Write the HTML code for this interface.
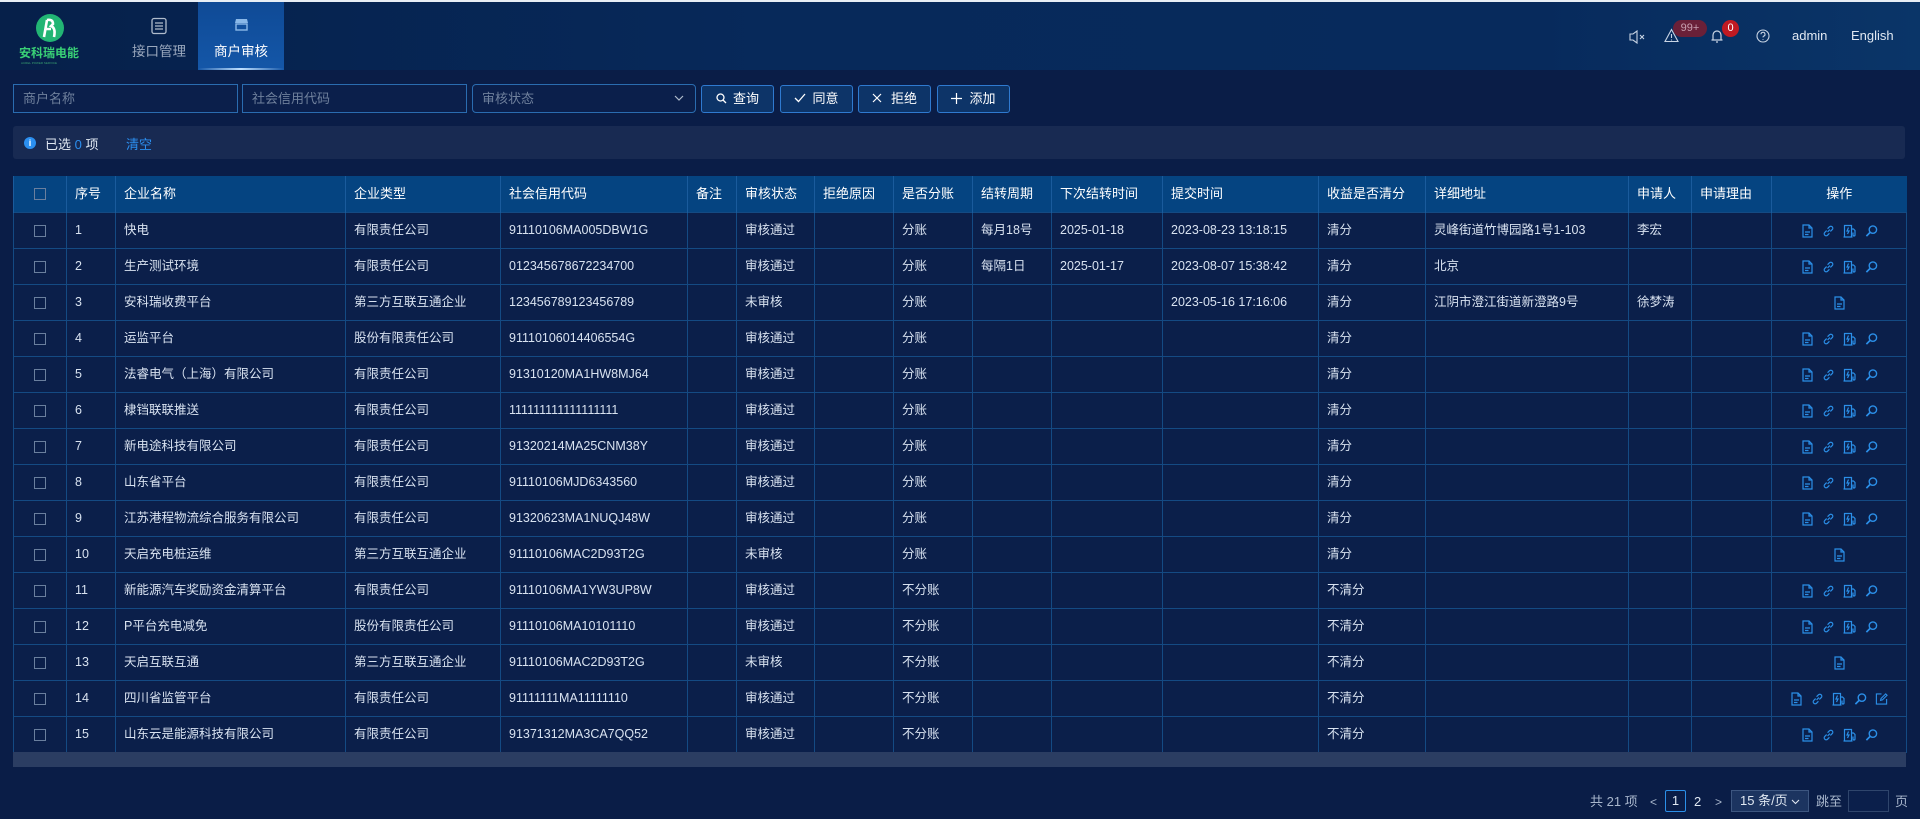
<!DOCTYPE html>
<html><head><meta charset="utf-8">
<style>
*{box-sizing:border-box;margin:0;padding:0}
body{width:1920px;height:819px;overflow:hidden;background:#0a1d47;font-family:"Liberation Sans","Noto Sans CJK SC",sans-serif;color:#d8e2f0;font-size:13px;position:relative}
.hdr{position:absolute;left:0;top:0;width:1920px;height:70px;background:linear-gradient(90deg,#06204a 0%,#07295a 40%,#072a5c 80%,#0a3568 100%);border-top:2px solid #e8eef5}
.tab{position:absolute;top:0;height:68px;width:86px;text-align:center;font-size:13.5px}
.tab .lbl{position:absolute;top:38px;left:0;width:100%}
.inp{position:absolute;top:84px;height:29px;border:1px solid #2a6cb0;background:#0b1f4b;color:#6f809c;padding-left:9px;line-height:27px;font-size:13px}
.btn{position:absolute;top:85px;height:28px;border:1px solid #2f7ad0;border-radius:3px;background:#0d3468;color:#fff;line-height:26px;text-align:center;font-size:13px}
.alert{position:absolute;left:13px;top:126px;width:1892px;height:33px;background:#182a52;border-radius:3px}
table{position:absolute;left:13px;top:176px;border-collapse:collapse;table-layout:fixed;width:1893px}
th{background:#054481;color:#fff;font-weight:normal;height:36px;text-align:left;padding-left:8px;border-left:1px solid #1a5b9c;font-size:13px;line-height:16px}
td{height:36px;border:1px solid #144a83;padding:0 0 0 8px;white-space:nowrap;overflow:hidden;background:#0b1f4a;font-size:12.5px;line-height:16px;vertical-align:middle}
td span.t{display:inline-block;vertical-align:middle}
th:first-child,td:first-child{padding-left:0;text-align:center}
.cb{display:inline-block;width:12px;height:12px;border:1px solid #6a7f9e;vertical-align:middle}
.ops{text-align:center;padding-left:0}
.ops svg{margin:0 4px;vertical-align:middle}
.sb{position:absolute;left:13px;top:752px;width:1893px;height:15px;background:#2b3d62}
.pg{position:absolute;top:792px;font-size:13px;color:#a8b6cc;line-height:20px}
</style></head><body>
<div class="hdr">
 <svg style="position:absolute;left:34px;top:10px" width="32" height="32" viewBox="0 0 32 32"><circle cx="16" cy="16" r="14" fill="#22b574"/><path d="M13 8 L10 25 M13 8 Q19 7 19 12 L17 14 Q22 16 20 25 M12 17 L17 17" stroke="#fff" stroke-width="2.6" fill="none"/></svg>
 <div style="position:absolute;left:19px;top:42px;font-size:12px;color:#39d076;font-weight:bold">安科瑞电能</div>
 <div style="position:absolute;left:21px;top:59px;font-size:3px;color:#39a070">ACREL POWER SERVICE</div>
 <div class="tab" style="left:116px;color:#9aa8bd">
  <svg style="position:absolute;left:34px;top:15px" width="18" height="18" viewBox="0 0 18 18"><rect x="2" y="1.5" width="14" height="15" rx="2" fill="none" stroke="#b0bccc" stroke-width="1.3"/><path d="M5 6h8M5 9h8M5 12h8" stroke="#b0bccc" stroke-width="1.2"/></svg>
  <div class="lbl">接口管理</div></div>
 <div class="tab" style="left:198px;background:linear-gradient(#0f4a96,#1457a8);color:#fff">
  <svg style="position:absolute;left:36px;top:15px" width="15" height="15" viewBox="0 0 15 15"><path d="M2 2h11l1 4H1z" fill="#8ab8e8"/><rect x="2" y="7" width="11" height="6" fill="none" stroke="#8ab8e8" stroke-width="1.4"/></svg>
  <div class="lbl">商户审核</div>
  <div style="position:absolute;left:0;bottom:0;width:86px;height:2px;background:linear-gradient(90deg,transparent,#bfe0ff,transparent)"></div></div>
 <svg style="position:absolute;left:1629px;top:28px" width="18" height="14" viewBox="0 0 18 14"><path d="M1 4h3l4-3v12l-4-3H1z" fill="none" stroke="#c8d4e4" stroke-width="1.1"/><path d="M11 5l4 4M15 5l-4 4" stroke="#c8d4e4" stroke-width="1.1"/></svg>
 <svg style="position:absolute;left:1664px;top:26px" width="15" height="15" viewBox="0 0 15 15"><path d="M7.5 1.5L14 13.5H1z" fill="none" stroke="#c8d4e4" stroke-width="1.1"/><path d="M7.5 6v4M7.5 11.5v1" stroke="#c8d4e4" stroke-width="1.1"/></svg>
 <div style="position:absolute;left:1673px;top:18px;width:34px;height:17px;border-radius:9px;background:#6a2038;color:#c9a0b0;font-size:11px;text-align:center;line-height:17px">99+</div>
 <svg style="position:absolute;left:1710px;top:26px" width="14" height="16" viewBox="0 0 14 16"><path d="M3 12V7a4 4 0 0 1 8 0v5h1.5H1.5zM6 14h2" fill="none" stroke="#c8d4e4" stroke-width="1.2"/></svg>
 <div style="position:absolute;left:1722px;top:18px;width:17px;height:17px;border-radius:9px;background:#c01a22;color:#fff;font-size:11px;text-align:center;line-height:17px">0</div>
 <svg style="position:absolute;left:1756px;top:27px" width="14" height="14" viewBox="0 0 14 14"><circle cx="7" cy="7" r="6" fill="none" stroke="#c8d4e4" stroke-width="1.1"/><path d="M5 5.3a2 2 0 1 1 2.5 1.9c-.4.2-.5.5-.5 1.2M7 10v.8" fill="none" stroke="#c8d4e4" stroke-width="1.1"/></svg>
 <div style="position:absolute;left:1792px;top:26px;color:#e0e8f2;font-size:13px">admin</div>
 <div style="position:absolute;left:1851px;top:26px;color:#e0e8f2;font-size:13px">English</div>
</div>

<div class="inp" style="left:13px;width:225px">商户名称</div>
<div class="inp" style="left:242px;width:225px">社会信用代码</div>
<div class="inp" style="left:472px;width:224px;border-radius:4px">审核状态<svg style="position:absolute;right:11px;top:10px" width="10" height="7" viewBox="0 0 10 7"><path d="M1 1l4 4 4-4" fill="none" stroke="#b0bccc" stroke-width="1.2"/></svg></div>
<div class="btn" style="left:701px;width:73px"><svg width="11" height="11" viewBox="0 0 11 11" style="vertical-align:-1px;margin-right:6px"><circle cx="4.5" cy="4.5" r="3.5" fill="none" stroke="#fff" stroke-width="1.3"/><path d="M7 7l3 3" stroke="#fff" stroke-width="1.3"/></svg>查询</div>
<div class="btn" style="left:780px;width:73px"><svg width="12" height="10" viewBox="0 0 12 10" style="vertical-align:0;margin-right:6px"><path d="M1 5l3.5 3.5L11 1" fill="none" stroke="#fff" stroke-width="1.3"/></svg>同意</div>
<div class="btn" style="left:858px;width:73px"><svg width="10" height="10" viewBox="0 0 10 10" style="vertical-align:0;margin-right:9px"><path d="M1 1l8 8M9 1l-8 8" stroke="#fff" stroke-width="1.2"/></svg>拒绝</div>
<div class="btn" style="left:937px;width:73px"><svg width="11" height="11" viewBox="0 0 11 11" style="vertical-align:-1px;margin-right:7px"><path d="M5.5 0v11M0 5.5h11" stroke="#fff" stroke-width="1.2"/></svg>添加</div>

<div class="alert">
 <div style="position:absolute;left:11px;top:11px;width:12px;height:12px;border-radius:6px;background:#2b8ff0;color:#fff;font-size:9px;text-align:center;line-height:12px;font-weight:bold">i</div>
 <div style="position:absolute;left:32px;top:8px;color:#e0e8f2">已选 <span style="color:#2b8ff0">0</span> 项</div>
 <div style="position:absolute;left:113px;top:8px;color:#2b8ff0">清空</div>
</div>

<svg width="0" height="0" style="position:absolute"><defs>
<symbol id="doc" viewBox="0 0 12 14"><path d="M1.5 1h6l3 3v9h-9z M7.5 1v3h3 M3.5 8h5M3.5 10.5h3.5" fill="none" stroke="#2b8fe8" stroke-width="1.2"/></symbol>
<symbol id="lnk" viewBox="0 0 14 14"><path d="M6 8l2.5-2.5 M5 6.5L3 8.5a2.1 2.1 0 0 0 3 3l2-2 M9 7.5l2-2a2.1 2.1 0 0 0-3-3L6 4.5" fill="none" stroke="#2b8fe8" stroke-width="1.3"/></symbol>
<symbol id="ful" viewBox="0 0 14 14"><path d="M1.5 13V1.5h7V13z M0.5 13h9 M8.5 5h2l1.5 1.5V11a1 1 0 0 1-2 0V8.5 M5.5 3.5L4 7h2l-1.5 3" fill="none" stroke="#2b8fe8" stroke-width="1.2"/></symbol>
<symbol id="srh" viewBox="0 0 14 14"><circle cx="8.5" cy="5.5" r="4" fill="none" stroke="#2b8fe8" stroke-width="1.5"/><path d="M5.5 8.5L1.5 12.5" stroke="#2b8fe8" stroke-width="1.8"/></symbol>
<symbol id="edt" viewBox="0 0 14 14"><path d="M7 1.5H1.5v11h11V7 M6 8.5l.5-2 5-5 1.5 1.5-5 5z" fill="none" stroke="#2b8fe8" stroke-width="1.2"/></symbol>
</defs></svg>

<table>
<colgroup><col style="width:53px"><col style="width:49px"><col style="width:230px"><col style="width:155px"><col style="width:187px"><col style="width:49px"><col style="width:78px"><col style="width:79px"><col style="width:79px"><col style="width:79px"><col style="width:111px"><col style="width:156px"><col style="width:107px"><col style="width:203px"><col style="width:63px"><col style="width:80px"><col style="width:135px"></colgroup>
<tr><th><span class="cb"></span></th><th>序号</th><th>企业名称</th><th>企业类型</th><th>社会信用代码</th><th>备注</th><th>审核状态</th><th>拒绝原因</th><th>是否分账</th><th>结转周期</th><th>下次结转时间</th><th>提交时间</th><th>收益是否清分</th><th>详细地址</th><th>申请人</th><th>申请理由</th><th style="text-align:center;padding-left:0">操作</th></tr>
<tr><td><span class="cb"></span></td><td>1</td><td>快电</td><td>有限责任公司</td><td>91110106MA005DBW1G</td><td></td><td>审核通过</td><td></td><td>分账</td><td>每月18号</td><td>2025-01-18</td><td>2023-08-23 13:18:15</td><td>清分</td><td>灵峰街道竹博园路1号1-103</td><td>李宏</td><td></td><td class="ops"><svg width="13" height="14"><use href="#doc"/></svg><svg width="13" height="14"><use href="#lnk"/></svg><svg width="14" height="14"><use href="#ful"/></svg><svg width="13" height="14"><use href="#srh"/></svg></td></tr>
<tr><td><span class="cb"></span></td><td>2</td><td>生产测试环境</td><td>有限责任公司</td><td>012345678672234700</td><td></td><td>审核通过</td><td></td><td>分账</td><td>每隔1日</td><td>2025-01-17</td><td>2023-08-07 15:38:42</td><td>清分</td><td>北京</td><td></td><td></td><td class="ops"><svg width="13" height="14"><use href="#doc"/></svg><svg width="13" height="14"><use href="#lnk"/></svg><svg width="14" height="14"><use href="#ful"/></svg><svg width="13" height="14"><use href="#srh"/></svg></td></tr>
<tr><td><span class="cb"></span></td><td>3</td><td>安科瑞收费平台</td><td>第三方互联互通企业</td><td>123456789123456789</td><td></td><td>未审核</td><td></td><td>分账</td><td></td><td></td><td>2023-05-16 17:16:06</td><td>清分</td><td>江阴市澄江街道新澄路9号</td><td>徐梦涛</td><td></td><td class="ops"><svg width="13" height="14"><use href="#doc"/></svg></td></tr>
<tr><td><span class="cb"></span></td><td>4</td><td>运监平台</td><td>股份有限责任公司</td><td>91110106014406554G</td><td></td><td>审核通过</td><td></td><td>分账</td><td></td><td></td><td></td><td>清分</td><td></td><td></td><td></td><td class="ops"><svg width="13" height="14"><use href="#doc"/></svg><svg width="13" height="14"><use href="#lnk"/></svg><svg width="14" height="14"><use href="#ful"/></svg><svg width="13" height="14"><use href="#srh"/></svg></td></tr>
<tr><td><span class="cb"></span></td><td>5</td><td>法睿电气（上海）有限公司</td><td>有限责任公司</td><td>91310120MA1HW8MJ64</td><td></td><td>审核通过</td><td></td><td>分账</td><td></td><td></td><td></td><td>清分</td><td></td><td></td><td></td><td class="ops"><svg width="13" height="14"><use href="#doc"/></svg><svg width="13" height="14"><use href="#lnk"/></svg><svg width="14" height="14"><use href="#ful"/></svg><svg width="13" height="14"><use href="#srh"/></svg></td></tr>
<tr><td><span class="cb"></span></td><td>6</td><td>棣铛联联推送</td><td>有限责任公司</td><td>111111111111111111</td><td></td><td>审核通过</td><td></td><td>分账</td><td></td><td></td><td></td><td>清分</td><td></td><td></td><td></td><td class="ops"><svg width="13" height="14"><use href="#doc"/></svg><svg width="13" height="14"><use href="#lnk"/></svg><svg width="14" height="14"><use href="#ful"/></svg><svg width="13" height="14"><use href="#srh"/></svg></td></tr>
<tr><td><span class="cb"></span></td><td>7</td><td>新电途科技有限公司</td><td>有限责任公司</td><td>91320214MA25CNM38Y</td><td></td><td>审核通过</td><td></td><td>分账</td><td></td><td></td><td></td><td>清分</td><td></td><td></td><td></td><td class="ops"><svg width="13" height="14"><use href="#doc"/></svg><svg width="13" height="14"><use href="#lnk"/></svg><svg width="14" height="14"><use href="#ful"/></svg><svg width="13" height="14"><use href="#srh"/></svg></td></tr>
<tr><td><span class="cb"></span></td><td>8</td><td>山东省平台</td><td>有限责任公司</td><td>91110106MJD6343560</td><td></td><td>审核通过</td><td></td><td>分账</td><td></td><td></td><td></td><td>清分</td><td></td><td></td><td></td><td class="ops"><svg width="13" height="14"><use href="#doc"/></svg><svg width="13" height="14"><use href="#lnk"/></svg><svg width="14" height="14"><use href="#ful"/></svg><svg width="13" height="14"><use href="#srh"/></svg></td></tr>
<tr><td><span class="cb"></span></td><td>9</td><td>江苏港程物流综合服务有限公司</td><td>有限责任公司</td><td>91320623MA1NUQJ48W</td><td></td><td>审核通过</td><td></td><td>分账</td><td></td><td></td><td></td><td>清分</td><td></td><td></td><td></td><td class="ops"><svg width="13" height="14"><use href="#doc"/></svg><svg width="13" height="14"><use href="#lnk"/></svg><svg width="14" height="14"><use href="#ful"/></svg><svg width="13" height="14"><use href="#srh"/></svg></td></tr>
<tr><td><span class="cb"></span></td><td>10</td><td>天启充电桩运维</td><td>第三方互联互通企业</td><td>91110106MAC2D93T2G</td><td></td><td>未审核</td><td></td><td>分账</td><td></td><td></td><td></td><td>清分</td><td></td><td></td><td></td><td class="ops"><svg width="13" height="14"><use href="#doc"/></svg></td></tr>
<tr><td><span class="cb"></span></td><td>11</td><td>新能源汽车奖励资金清算平台</td><td>有限责任公司</td><td>91110106MA1YW3UP8W</td><td></td><td>审核通过</td><td></td><td>不分账</td><td></td><td></td><td></td><td>不清分</td><td></td><td></td><td></td><td class="ops"><svg width="13" height="14"><use href="#doc"/></svg><svg width="13" height="14"><use href="#lnk"/></svg><svg width="14" height="14"><use href="#ful"/></svg><svg width="13" height="14"><use href="#srh"/></svg></td></tr>
<tr><td><span class="cb"></span></td><td>12</td><td>P平台充电减免</td><td>股份有限责任公司</td><td>91110106MA10101110</td><td></td><td>审核通过</td><td></td><td>不分账</td><td></td><td></td><td></td><td>不清分</td><td></td><td></td><td></td><td class="ops"><svg width="13" height="14"><use href="#doc"/></svg><svg width="13" height="14"><use href="#lnk"/></svg><svg width="14" height="14"><use href="#ful"/></svg><svg width="13" height="14"><use href="#srh"/></svg></td></tr>
<tr><td><span class="cb"></span></td><td>13</td><td>天启互联互通</td><td>第三方互联互通企业</td><td>91110106MAC2D93T2G</td><td></td><td>未审核</td><td></td><td>不分账</td><td></td><td></td><td></td><td>不清分</td><td></td><td></td><td></td><td class="ops"><svg width="13" height="14"><use href="#doc"/></svg></td></tr>
<tr><td><span class="cb"></span></td><td>14</td><td>四川省监管平台</td><td>有限责任公司</td><td>91111111MA11111110</td><td></td><td>审核通过</td><td></td><td>不分账</td><td></td><td></td><td></td><td>不清分</td><td></td><td></td><td></td><td class="ops"><svg width="13" height="14"><use href="#doc"/></svg><svg width="13" height="14"><use href="#lnk"/></svg><svg width="14" height="14"><use href="#ful"/></svg><svg width="13" height="14"><use href="#srh"/></svg><svg width="13" height="14"><use href="#edt"/></svg></td></tr>
<tr><td><span class="cb"></span></td><td>15</td><td>山东云是能源科技有限公司</td><td>有限责任公司</td><td>91371312MA3CA7QQ52</td><td></td><td>审核通过</td><td></td><td>不分账</td><td></td><td></td><td></td><td>不清分</td><td></td><td></td><td></td><td class="ops"><svg width="13" height="14"><use href="#doc"/></svg><svg width="13" height="14"><use href="#lnk"/></svg><svg width="14" height="14"><use href="#ful"/></svg><svg width="13" height="14"><use href="#srh"/></svg></td></tr>
</table>
<div class="sb"></div>

<div class="pg" style="left:1590px">共 21 项</div>
<div class="pg" style="left:1650px;font-size:12px">&lt;</div>
<div class="pg" style="left:1665px;top:790px;width:21px;height:22px;border:1px solid #2b8fe8;border-radius:2px;text-align:center;color:#e0e8f2">1</div>
<div class="pg" style="left:1694px;color:#e0e8f2">2</div>
<div class="pg" style="left:1715px;font-size:12px">&gt;</div>
<div class="pg" style="left:1731px;top:790px;width:78px;height:22px;border:1px solid #3d5680;background:#1c3460;color:#e0e8f2;padding-left:8px">15 条/页 <svg width="9" height="6" viewBox="0 0 9 6"><path d="M1 1l3.5 3.5L8 1" fill="none" stroke="#e0e8f2" stroke-width="1.1"/></svg></div>
<div class="pg" style="left:1816px">跳至</div>
<div class="pg" style="left:1848px;top:790px;width:41px;height:22px;border:1px solid #2f456c;background:#0b1f4b"></div>
<div class="pg" style="left:1895px">页</div>
</body></html>
